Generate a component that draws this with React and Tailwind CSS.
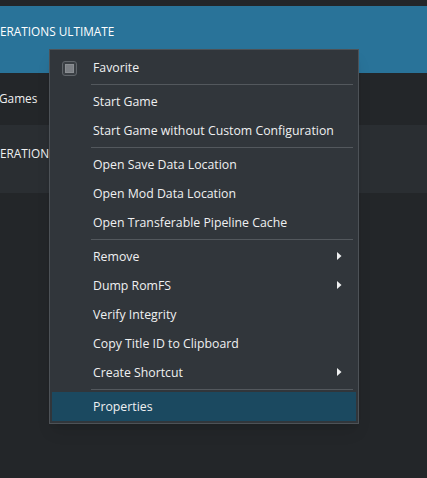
import { Fragment } from "react";

const groups = [
  ["Start Game", "Start Game without Custom Configuration"],
  ["Open Save Data Location", "Open Mod Data Location", "Open Transferable Pipeline Cache"],
  [
    { label: "Remove", sub: true },
    { label: "Dump RomFS", sub: true },
    "Verify Integrity",
    "Copy Title ID to Clipboard",
    { label: "Create Shortcut", sub: true },
  ],
];

function Arrow() {
  return (
    <svg width="5" height="8" viewBox="0 0 5 8" className="absolute right-[14px] top-[10px]">
      <path d="M0 0 L4.5 4 L0 8 Z" fill="#eff0f1" />
    </svg>
  );
}

function Item({ label, sub, active }) {
  return (
    <div
      className={`relative h-[29px] flex items-center pl-[41px] mx-[2px] pt-px ${
        active ? "bg-[#1b4960]" : ""
      }`}
    >
      {label}
      {sub && <Arrow />}
    </div>
  );
}

function Sep() {
  return (
    <div className="h-[5px] flex items-center pl-[41px] pr-[5px]">
      <div className="h-px w-full bg-[#53585d]" />
    </div>
  );
}

export default function App() {
  return (
    <div
      className="relative w-[427px] h-[478px] overflow-hidden bg-[#232629] text-[#eff0f1]"
      style={{ fontFamily: '"Open Sans", "Noto Sans", sans-serif' }}
    >
      <div className="text-[11.8px]">
        <div className="h-[6px]" />
        <div className="h-[67px] bg-[#297399] pt-[17px] text-white">ERATIONS ULTIMATE</div>
        <div className="h-[52px] flex items-center -ml-[1px]">Games</div>
        <div className="h-[68px] bg-[#2a2e32] pt-[20px]">ERATIONS ULTIMATE</div>
      </div>

      <div className="absolute left-[49px] top-[49px] w-[310px] border border-[#4d5257] bg-[#31363b] pt-[3px] pb-[2px] shadow-lg text-[12.3px]">
        <div className="relative h-[29px] flex items-center pl-[43px] pt-px">
          <div className="absolute left-[12px] top-[8px] w-[15px] h-[15px] rounded-[3px] border border-[#60656a] bg-[#3a3f44] flex items-center justify-center">
            <div className="w-[9px] h-[9px] bg-[#7c8085] border border-[#8a8e92]" />
          </div>
          Favorite
        </div>
        {groups.map((g, i) => (
          <Fragment key={i}>
            <Sep />
            {g.map((it) =>
              typeof it === "string" ? (
                <Item key={it} label={it} />
              ) : (
                <Item key={it.label} label={it.label} sub={it.sub} />
              )
            )}
          </Fragment>
        ))}
        <Sep />
        <Item label="Properties" active />
      </div>
    </div>
  );
}
